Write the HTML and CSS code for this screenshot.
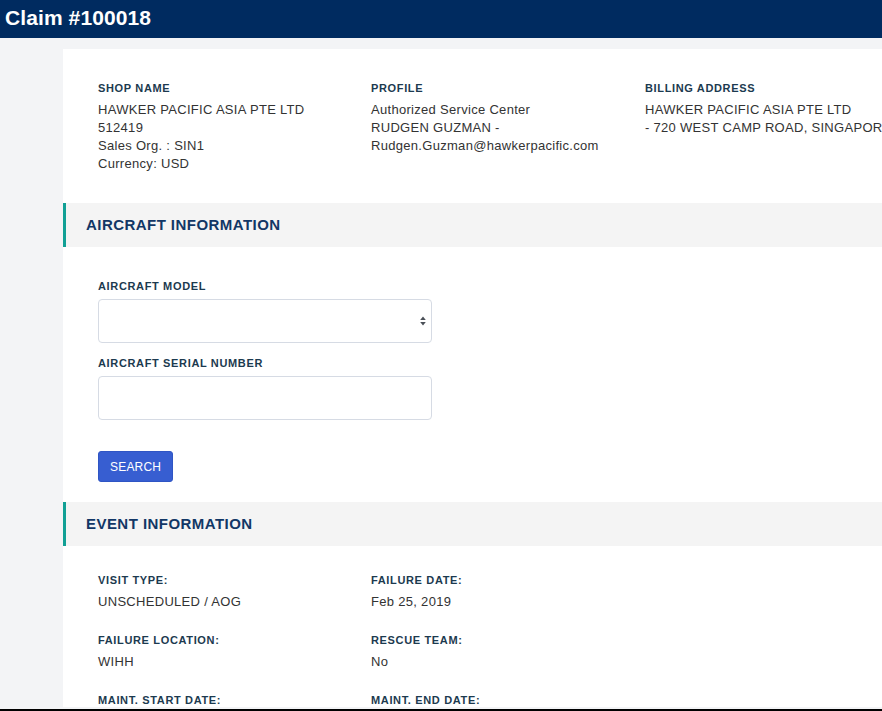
FILE: index.html
```html
<!DOCTYPE html>
<html lang="en">
<head>
<meta charset="utf-8">
<title>Claim #100018</title>
<link rel="stylesheet" href="styles.css">
</head>
<body>
<header class="topbar"><h1 class="title">Claim #100018</h1></header>
<main class="page">
  <div class="card">
    <div class="info-grid">
      <div class="col">
        <div class="label">SHOP NAME</div>
        <div class="value">HAWKER PACIFIC ASIA PTE LTD<br>512419<br>Sales Org. : SIN1<br>Currency: USD</div>
      </div>
      <div class="col">
        <div class="label">PROFILE</div>
        <div class="value">Authorized Service Center<br>RUDGEN GUZMAN -<br>Rudgen.Guzman@hawkerpacific.com</div>
      </div>
      <div class="col">
        <div class="label">BILLING ADDRESS</div>
        <div class="value nowrap">HAWKER PACIFIC ASIA PTE LTD<br>- 720 WEST CAMP ROAD, SINGAPORE</div>
      </div>
    </div>

    <div class="section-head">AIRCRAFT INFORMATION</div>
    <div class="form">
      <div class="label">AIRCRAFT MODEL</div>
      <div class="field select">
        <svg class="arrows" width="6" height="10" viewBox="0 0 6 10"><path d="M3 0.5 L5.8 4 H0.2 Z M3 9.5 L5.8 6 H0.2 Z" fill="#4a4f57"/></svg>
      </div>
      <div class="label label-gap">AIRCRAFT SERIAL NUMBER</div>
      <div class="field"></div>
      <button class="btn">SEARCH</button>
    </div>

    <div class="section-head">EVENT INFORMATION</div>
    <div class="event-grid">
      <div class="item">
        <div class="label">VISIT TYPE:</div>
        <div class="value">UNSCHEDULED / AOG</div>
      </div>
      <div class="item">
        <div class="label">FAILURE DATE:</div>
        <div class="value">Feb 25, 2019</div>
      </div>
      <div class="item">
        <div class="label">FAILURE LOCATION:</div>
        <div class="value">WIHH</div>
      </div>
      <div class="item">
        <div class="label">RESCUE TEAM:</div>
        <div class="value">No</div>
      </div>
      <div class="item">
        <div class="label">MAINT. START DATE:</div>
      </div>
      <div class="item">
        <div class="label">MAINT. END DATE:</div>
      </div>
    </div>
  </div>
</main>
</body>
</html>
```

FILE: styles.css
```css
html {
  background: #000;
}
body {
  margin: 0;
  height: 709px;
  overflow: hidden;
  background: #f3f4f6;
  font-family: "Liberation Sans", Arial, Helvetica, sans-serif;
  color: #333;
}
.topbar {
  height: 38px;
  background: #002b60;
  display: flex;
  align-items: center;
  padding-left: 5px;
}
.title {
  margin: 0;
  font-size: 21px;
  font-weight: bold;
  color: #fff;
  line-height: 1;
  letter-spacing: 0.1px;
  position: relative;
  top: -2px;
}
.page {
  padding: 11px 0 0 63px;
}
.card {
  width: 1000px;
  background: #fff;
  padding-top: 32px;
}
.info-grid {
  display: grid;
  grid-template-columns: 273px 274px 400px;
  padding-left: 35px;
  padding-bottom: 30px;
}
.label {
  font-size: 11px;
  line-height: 14px;
  font-weight: bold;
  letter-spacing: 0.65px;
  color: #1c3a4f;
}
.value {
  font-size: 13px;
  line-height: 18px;
  color: #333;
  margin-top: 6px;
  letter-spacing: 0.3px;
}
.nowrap {
  white-space: nowrap;
}
.section-head {
  height: 44px;
  line-height: 44px;
  background: #f4f4f4;
  border-left: 3px solid #11a095;
  padding-left: 20px;
  font-size: 15px;
  font-weight: bold;
  letter-spacing: 0.45px;
  color: #123766;
}
.form {
  padding: 32px 0 20px 35px;
  display: flex;
  flex-direction: column;
  align-items: flex-start;
}
.field {
  box-sizing: border-box;
  width: 334px;
  height: 44px;
  border: 1px solid #d6dbe4;
  border-radius: 4px;
  margin-top: 6px;
  background: #fff;
}
.select {
  display: flex;
  align-items: center;
  justify-content: flex-end;
  padding-right: 5px;
}
.label-gap {
  margin-top: 13px;
}
.btn {
  margin-top: 31px;
  height: 31px;
  padding: 1px 11px 0;
  background: #375ed1;
  color: #fff;
  border: 1px solid #2f55c4;
  border-radius: 3px;
  font-family: "Liberation Sans", Arial, Helvetica, sans-serif;
  font-size: 12px;
  line-height: 28px;
  letter-spacing: 0.2px;
}
.event-grid {
  display: grid;
  grid-template-columns: 273px 273px;
  padding: 27px 0 0 35px;
  row-gap: 22px;
}
.item .value {
  margin-top: 6px;
}
```
